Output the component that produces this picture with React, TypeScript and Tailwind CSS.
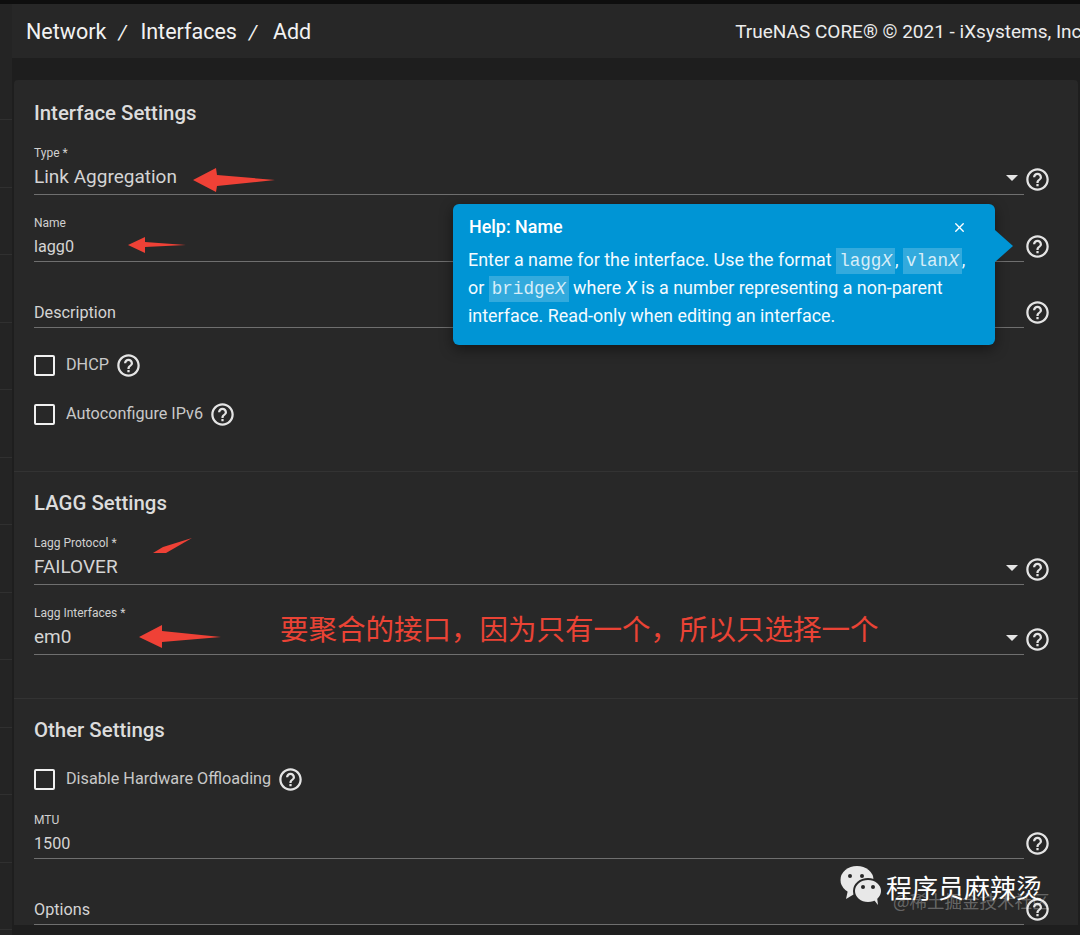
import { X } from 'lucide-react';

const sans = 'font-["Roboto",sans-serif]';

const HelpIcon = ({ className = '' }: { className?: string }) => (
    <svg viewBox="0 0 24 24" className={`h-[27px] w-[27px] shrink-0 fill-[#e4e4e4] ${className}`}>
        <path d="M11 18h2v-2h-2v2zm1-16C6.48 2 2 6.48 2 12s4.48 10 10 10 10-4.48 10-10S17.52 2 12 2zm0 18c-4.41 0-8-3.59-8-8s3.59-8 8-8 8 3.59 8 8-3.59 8-8 8zm0-14c-2.21 0-4 1.79-4 4h2c0-1.1.9-2 2-2s2 .9 2 2c0 2-3 1.75-3 5h2c0-2.25 3-2.5 3-5 0-2.21-1.79-4-4-4z" />
    </svg>
);

type FieldProps = {
    label?: string;
    value: string;
    select?: boolean;
    large?: boolean;
    className: string;
};

const Field = ({ label, value, select, large, className }: FieldProps) => (
    <div className={`flex w-[1018px] ${className}`}>
        <div className="flex w-[990px] flex-col justify-end border-b border-[#6f6f6f]">
            {label && <div className="h-[14px] text-[12px] leading-[14px] text-[#d0d0d0]">{label}</div>}
            <div className={`flex items-center justify-between ${large ? 'h-[34px] pt-[1px] text-[19px]' : 'h-[31px] pt-[3px] text-[16.2px]'} text-[#d4d4d4]`}>
                <span>{value}</span>
                {select && <span className="mr-[6px] h-0 w-0 border-x-[6.5px] border-t-[6.5px] border-x-transparent border-t-[#e4e4e4]" />}
            </div>
        </div>
        <HelpIcon className="mt-auto mb-[2px]" />
    </div>
);

const CheckRow = ({ label, className }: { label: string; className: string }) => (
    <div className={`flex h-[27px] items-center ${className}`}>
        <span className="h-[21px] w-[21px] rounded-[2px] border-[2.5px] border-[#f0f0f0]" />
        <span className="ml-[11px] text-[16.2px] text-[#c8c8c8]">{label}</span>
        <HelpIcon className="ml-[6px]" />
    </div>
);

const Heading = ({ title }: { title: string }) => <h2 className="h-[26px] text-[20.4px] leading-[26px] font-medium text-[#dcdcdc]">{title}</h2>;

const Code = ({ name }: { name: string }) => (
    <code className='bg-white/20 px-[3px] py-[3px] font-["Liberation_Mono",monospace] text-[17.6px] leading-none text-[#d8eef9]'>
        {name}
        <i>X</i>
    </code>
);

const railRows = Array.from({ length: 14 });

const Overlay = () => (
    <svg viewBox="0 0 1080 935" className="pointer-events-none absolute inset-0 h-[935px] w-[1080px]">
        <g fill="#ef4136">
            <polygon points="193,180 216,168 217,175 275,180 217,186 216,192" />
            <polygon points="128,245 145,237 145,242 186,245 145,247 145,253" />
            <polygon points="153,553 163,547 192,538 166,553" />
            <polygon points="139,637 162,625 162,631 221,637 162,642 162,648" />
        </g>
        {/* wechat logo */}
        <g fill="#e8e8e8">
            <ellipse cx="857" cy="880" rx="16.5" ry="14" />
            <polygon points="848,890 846,899 856,893" />
            <ellipse cx="868" cy="891" rx="14" ry="12" stroke="#282828" strokeWidth="2" />
            <polygon points="874,900 878,905 877,897" />
        </g>
        <g fill="#282828">
            <circle cx="850" cy="876" r="2" />
            <circle cx="862" cy="876" r="2" />
            <circle cx="863" cy="887" r="2" />
            <circle cx="873" cy="887" r="2" />
        </g>
    </svg>
);

const App = () => {
    return (
        <div className={`relative h-[935px] w-[1080px] overflow-hidden bg-[#1e1e1e] ${sans}`}>
            <div className="h-[4px] bg-[#0e0e0e]" />
            <div className="flex h-[931px]">
                <aside className="w-[12px] shrink-0 bg-[#242424] pt-[48.5px]">
                    {railRows.map((_, index) => (
                        <div key={index} className="h-[67.5px] border-b border-[#303030]" />
                    ))}
                </aside>
                <div className="min-w-0 flex-1">
                    <header className="flex h-[54px] items-center overflow-hidden bg-[#272727] pt-[2px] pl-[14px]">
                        <div className="flex items-center text-[21.5px] whitespace-nowrap text-[#f2f2f2]">
                            <span>Network</span>
                            <span className="mx-[12px] text-[20px] italic">/</span>
                            <span className="ml-[2px]">Interfaces</span>
                            <span className="mx-[12px] text-[20px] italic">/</span>
                            <span className="ml-[4px]">Add</span>
                        </div>
                        <div className="ml-[424px] text-[19px] whitespace-nowrap text-[#ececec]">TrueNAS CORE® © 2021 - iXsystems, Inc</div>
                    </header>
                    <main className="mt-[22px] mr-[2px] ml-[2px] rounded-t-[4px] bg-[#282828] pt-[20px] pl-[20px]">
                        <Heading title="Interface Settings" />
                        <Field label="Type *" value="Link Aggregation" select large className="mt-[20px] h-[49px]" />
                        <Field label="Name" value="lagg0" className="mt-[21px] h-[46px]" />
                        <Field value="Description" className="mt-[20px] h-[46px]" />
                        <CheckRow label="DHCP" className="mt-[24px]" />
                        <CheckRow label="Autoconfigure IPv6" className="mt-[22px]" />
                        <div className="mt-[43px] ml-[-20px] border-t border-[#333333]" />
                        <div className="mt-[18px]">
                            <Heading title="LAGG Settings" />
                        </div>
                        <Field label="Lagg Protocol *" value="FAILOVER" select large className="mt-[20px] h-[49px]" />
                        <Field label="Lagg Interfaces *" value="em0" select large className="mt-[21px] h-[49px]" />
                        <div className="mt-[43px] ml-[-20px] border-t border-[#333333]" />
                        <div className="mt-[18px]">
                            <Heading title="Other Settings" />
                        </div>
                        <CheckRow label="Disable Hardware Offloading" className="mt-[23px]" />
                        <Field label="MTU" value="1500" className="mt-[20px] h-[46px]" />
                        <Field value="Options" className="mt-[20px] h-[46px]" />
                    </main>
                </div>
            </div>

            <div className="absolute top-[204px] left-[453px] h-[141px] w-[542px] rounded-[6px] bg-[#0095d5] pt-[14px] pl-[15px] text-white shadow-[0_4px_14px_rgba(0,0,0,0.45)]">
                <div className="flex h-[18px] items-center justify-between pr-[28px] text-[17.9px] font-medium">
                    <span className="ml-[1px]">Help: Name</span>
                    <X size={15} strokeWidth={2.2} />
                </div>
                <p className="mt-[10px] w-[510px] text-[17.9px] leading-[28px] text-[#f4fbff]">
                    Enter a name for the interface. Use the format <Code name="lagg" />, <Code name="vlan" />, or <Code name="bridge" /> where <i>X</i> is a
                    number representing a non-parent interface. Read-only when editing an interface.
                </p>
                <span className="absolute top-[26px] left-[542px] h-0 w-0 border-y-[16px] border-l-[18px] border-y-transparent border-l-[#0095d5]" />
            </div>

            <Overlay />
            <div className='absolute top-[609px] left-[280px] font-["Noto_Sans_CJK_SC",sans-serif] text-[28.5px] leading-[38px] whitespace-nowrap text-[#ea4335]'>
                要聚合的接口，因为只有一个，所以只选择一个
            </div>
            <div className='absolute top-[870px] left-[886px] font-["Noto_Sans_CJK_SC",sans-serif] text-[26px] leading-[34px] whitespace-nowrap text-white'>
                程序员麻辣烫
            </div>
            <div className='absolute top-[889px] left-[893px] font-["Noto_Sans_CJK_SC",sans-serif] text-[17.5px] leading-[24px] whitespace-nowrap text-white/30'>
                @稀土掘金技术社区
            </div>
        </div>
    );
};

export default App;
